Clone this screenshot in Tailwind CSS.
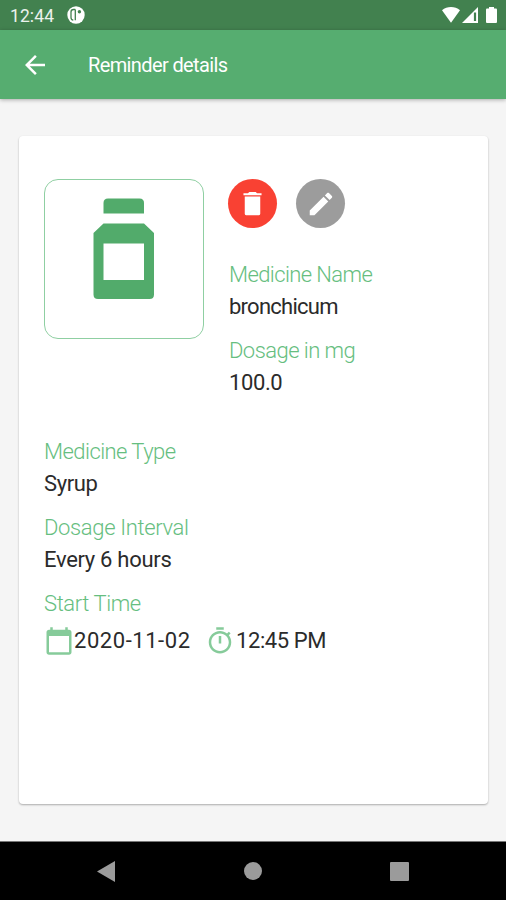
<!DOCTYPE html>
<html lang="en">
<head>
    <meta charset="UTF-8">
    <meta name="viewport" content="width=device-width, initial-scale=1.0">
    <title>Reminder details</title>
    <script src="https://cdn.jsdelivr.net/npm/@tailwindcss/browser@4"></script>
</head>
<body class="bg-[#f5f5f5] font-['Roboto',sans-serif]">
    <div class="h-[900px] w-[506px] flex flex-col overflow-hidden">

        <!-- Status bar -->
        <div class="h-[30px] shrink-0 bg-[#42814f] flex items-center pl-2.5 pr-2 text-white">
            <span class="pt-[3px] text-[17.5px] leading-none tracking-[0.1px] text-white/90">12:44</span>
            <svg class="ml-[13px] size-[18px]" viewBox="0 0 18 18">
                <circle cx="9" cy="9" r="8.7" fill="#fff"/>
                <path d="M8.300 3.500H6.500C4.800 3.500 4 4.400 4 6v5.500c0 1.600.8 2.500 2.300 2.700" fill="none" stroke="#42814f" stroke-width="1.300"/>
                <path d="M8.300 3.500v10.800" stroke="#42814f" stroke-width="1.300"/>
                <circle cx="12.400" cy="5.700" r="1.700" fill="#42814f"/>
            </svg>
            <svg class="ml-auto w-[18px] h-4" viewBox="0 0 18 16" fill="#fff">
                <path d="M0 3.200C5-1 13-1 18 3.200L9 15.700z"/>
            </svg>
            <svg class="ml-[2px] size-4" viewBox="0 0 16 16">
                <path d="M16 0v16H0z" fill="#fff"/>
                <path d="M13 5.500V14" stroke="#42814f" stroke-width="2.200"/>
            </svg>
            <svg class="ml-2 mr-[1px] w-[11px] h-4" viewBox="0 0 11 16" fill="#fff">
                <path d="M3 0h5v1.600h1.700c.8 0 1.300.5 1.300 1.300v11.800c0 .8-.5 1.300-1.300 1.300H1.300C.5 16 0 15.500 0 14.700V2.900C0 2.100.5 1.600 1.300 1.600H3z"/>
            </svg>
        </div>

        <!-- App bar -->
        <header class="h-[69px] shrink-0 bg-[#56ad70] flex items-center pl-5 text-white shadow-[0_1px_4px_rgba(0,0,0,0.3)]">
            <svg class="size-[30px]" viewBox="0 0 24 24" fill="currentColor">
                <path d="M20 11H7.830l5.590-5.590L12 4l-8 8 8 8 1.410-1.410L7.830 13H20v-2z"/>
            </svg>
            <h1 class="ml-[38px] pt-px text-[20px] leading-none tracking-[-0.62px]">Reminder details</h1>
        </header>

        <main class="flex-1 pl-[19px] pr-[18px] pt-[37px]">
            <div class="h-[668px] bg-white rounded-[4px] px-[25px] pt-[43px] shadow-[0_1px_2px_rgba(0,0,0,0.3)]">
                <div class="flex gap-[25px]">
                    <div class="size-40 rounded-[14px] border border-[#8fcfa2] pl-12 pt-[18px]">
                        <svg class="w-[61px] h-[101px]" viewBox="0 0 61 101" fill="#52ab6b">
                            <path d="M10.500 15.500V5q0-4.500 4.500-4.500h31.500Q51 .5 51 5v10.500z"/>
                            <path fill-rule="evenodd" d="M10.500 25.500H51L61 35v61.500q0 4.500-4.500 4.500h-51.500Q.5 101 .5 96.500V35zM10.500 45.500v36.500H51V45.500z"/>
                        </svg>
                    </div>
                    <div class="-ml-px">
                        <div class="flex gap-[19px]">
                            <button class="size-[49px] rounded-full bg-[#f94133] flex items-center justify-center">
                                <svg class="size-[31px]" viewBox="0 0 24 24" fill="#fff">
                                    <path d="M6 6.600h12V20q0 1-1 1H7q-1 0-1-1zM19 4h-3.500l-1-1h-5l-1 1H5v1.600h14V4z"/>
                                </svg>
                            </button>
                            <button class="size-[49px] rounded-full bg-[#9c9c9c] flex items-center justify-center">
                                <svg class="size-[30px]" viewBox="0 0 24 24" fill="#fff">
                                    <path d="M3 17.250V21h3.750L17.810 9.940l-3.750-3.750L3 17.250zM20.710 7.040c.39-.39.39-1.020 0-1.410l-2.340-2.340c-.39-.39-1.020-.39-1.410 0l-1.830 1.830 3.750 3.750 1.830-1.830z"/>
                                </svg>
                            </button>
                        </div>
                        <dl class="mt-[31px] pl-px text-[22px] leading-8 text-[#2b2b2b] whitespace-nowrap">
                            <dt class="font-light text-[#66be80] tracking-[-0.6px]">Medicine Name</dt>
                            <dd class="mb-3 tracking-[-0.75px]">bronchicum</dd>
                            <dt class="font-light text-[#66be80] tracking-[-0.55px]">Dosage in mg</dt>
                            <dd class="tracking-[-0.4px]">100.0</dd>
                        </dl>
                    </div>
                </div>

                <dl class="mt-[37px] text-[22px] leading-8 text-[#2b2b2b] whitespace-nowrap">
                    <dt class="font-light text-[#66be80] tracking-[-0.55px]">Medicine Type</dt>
                    <dd class="mb-3 tracking-[-0.4px]">Syrup</dd>
                    <dt class="font-light text-[#66be80] tracking-[-0.35px]">Dosage Interval</dt>
                    <dd class="mb-3 tracking-[-0.3px]">Every 6 hours</dd>
                    <dt class="font-light text-[#66be80] tracking-[-0.4px]">Start Time</dt>
                    <dd class="mt-[5px] flex items-center">
                        <svg class="size-[30px]" viewBox="0 0 24 24" fill="#86cb9a">
                            <path d="M20 3h-1V1h-2v2H7V1H5v2H4c-1.100 0-2 .9-2 2v16c0 1.100.9 2 2 2h16c1.100 0 2-.9 2-2V5c0-1.100-.9-2-2-2zm0 18H4V8h16v13z"/>
                        </svg>
                        <span class="w-[131px] tracking-[0.55px]">2020-11-02</span>
                        <svg class="size-[30px]" viewBox="0 0 24 24" fill="#86cb9a">
                            <path d="M15 1H9v2h6V1zm-4 13h2V8h-2v6zm8.030-6.610l1.420-1.420c-.43-.51-.9-.99-1.410-1.410l-1.420 1.420C16.070 4.740 14.120 4 12 4c-4.970 0-9 4.030-9 9s4.020 9 9 9 9-4.030 9-9c0-2.120-.74-4.070-1.970-5.610zM12 20c-3.870 0-7-3.130-7-7s3.130-7 7-7 7 3.130 7 7-3.130 7-7 7z"/>
                        </svg>
                        <span class="ml-px tracking-[-0.4px]">12:45 PM</span>
                    </dd>
                </dl>
            </div>
        </main>

        <!-- Navigation bar -->
        <nav class="h-[59px] shrink-0 bg-black border-t border-[#777] flex items-center justify-between pl-[97px] pr-[97px]">
            <svg class="w-[18px] h-[21px]" viewBox="0 0 18 21" fill="#9b9b9b"><path d="M18 0v21L0 10.500z"/></svg>
            <span class="size-[18px] rounded-full bg-[#9b9b9b]"></span>
            <span class="size-[19px] rounded-[1px] bg-[#9b9b9b]"></span>
        </nav>
    </div>
</body>
</html>
